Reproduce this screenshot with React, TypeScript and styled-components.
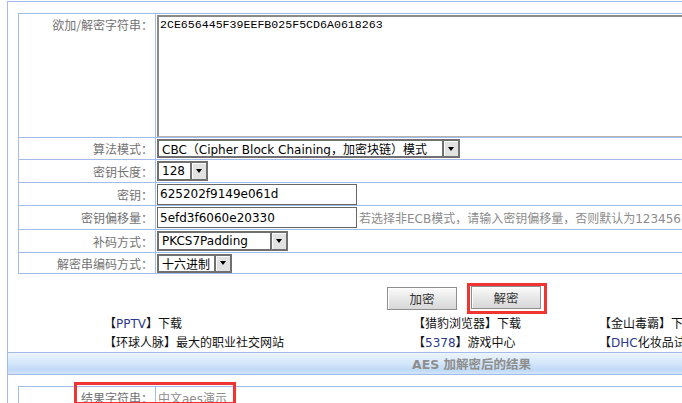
import React from 'react';
import styled, { createGlobalStyle } from 'styled-components';

const line = '#a2bbe8';
const cjk = `"Noto Sans CJK SC", sans-serif`;
const latin = `"DejaVu Sans", "Noto Sans CJK SC", sans-serif`;

const GlobalStyle = createGlobalStyle`
  html, body {
    margin: 0;
    padding: 0;
    background: #fff;
    overflow: hidden;
  }
  body {
    font-family: ${latin};
    font-size: 12px;
    color: #000;
  }
`;

const App: React.FC = () => {
  return (
    <>
      <GlobalStyle />
      <Page>
        <Section>
          <FormBox>
            <Row $h={124}>
              <Label $top>欲加/解密字符串：</Label>
              <Cell $top>
                <Area readOnly value="2CE656445F39EEFB025F5CD6A0618263" />
              </Cell>
            </Row>
            <Row $h={22}>
              <Label>算法模式：</Label>
              <Cell>
                <Select $w={303} $h={19}>
                  <SelectText>CBC（Cipher Block Chaining，加密块链）模式</SelectText>
                  <Arrow />
                </Select>
              </Cell>
            </Row>
            <Row $h={23}>
              <Label>密钥长度：</Label>
              <Cell>
                <Select $w={51} $h={20}>
                  <SelectText>128</SelectText>
                  <Arrow />
                </Select>
              </Cell>
            </Row>
            <Row $h={23}>
              <Label>密钥：</Label>
              <Cell>
                <Input readOnly value="625202f9149e061d" />
              </Cell>
            </Row>
            <Row $h={24}>
              <Label>密钥偏移量：</Label>
              <Cell>
                <Input readOnly value="5efd3f6060e20330" />
                <Hint>若选择非ECB模式，请输入密钥偏移量，否则默认为1234567890123456</Hint>
              </Cell>
            </Row>
            <Row $h={23}>
              <Label>补码方式：</Label>
              <Cell>
                <Select $w={131} $h={20}>
                  <SelectText>PKCS7Padding</SelectText>
                  <Arrow />
                </Select>
              </Cell>
            </Row>
            <Row $h={21}>
              <Label>解密串编码方式：</Label>
              <Cell>
                <Select $w={75} $h={19}>
                  <SelectText>十六进制</SelectText>
                  <Arrow />
                </Select>
              </Cell>
            </Row>
          </FormBox>

          <ButtonBar>
            <Button>加密</Button>
            <Highlight>
              <Button>解密</Button>
            </Highlight>
          </ButtonBar>

          <Ads>
            <Ad>【<Latin>PPTV</Latin>】下载</Ad>
            <Ad>【猎豹浏览器】下载</Ad>
            <Ad>【金山毒霸】下载</Ad>
            <Ad>【环球人脉】最大的职业社交网站</Ad>
            <Ad>【<Latin>5378</Latin>】游戏中心</Ad>
            <Ad>【<Latin>DHC</Latin>化妆品试用】</Ad>
          </Ads>
        </Section>

        <Bar>
          <BarTitle>AES 加解密后的结果</BarTitle>
        </Bar>

        <ResultSection>
          <FormBox>
            <Row $h={22}>
              <Label>结果字符串：</Label>
              <Cell>
                <ResultText>中文aes演示</ResultText>
              </Cell>
            </Row>
          </FormBox>
          <Mark />
        </ResultSection>
      </Page>
    </>
  );
};

const Page = styled.div`
  margin: 1px 0 0 7px;
  width: 1000px;
  height: 430px;
  border-top: 1px solid ${line};
  border-left: 1px solid ${line};
`;

const Section = styled.div`
  padding: 11px 0 0 10px;
`;

const FormBox = styled.div`
  border-top: 1px solid ${line};
  border-left: 1px solid ${line};
`;

const Row = styled.div<{ $h: number }>`
  display: grid;
  grid-template-columns: 137px 1fr;
  height: ${({ $h }) => $h}px;
  box-sizing: border-box;
  border-bottom: 1px solid ${line};
`;

const Label = styled.div<{ $top?: boolean }>`
  box-sizing: border-box;
  border-right: 1px solid ${line};
  display: flex;
  justify-content: flex-end;
  align-items: ${({ $top }) => ($top ? 'flex-start' : 'center')};
  padding: ${({ $top }) => ($top ? '2px' : '0')} 2px 0 0;
  font-family: ${cjk};
  font-size: 12px;
  color: #727272;
  white-space: nowrap;
`;

const Cell = styled.div<{ $top?: boolean }>`
  display: flex;
  align-items: ${({ $top }) => ($top ? 'flex-start' : 'center')};
  padding-left: 1px;
  white-space: nowrap;
  overflow: hidden;
`;

const Area = styled.textarea`
  box-sizing: border-box;
  width: 800px;
  height: 122px;
  margin: 1px 0 0;
  border: 1px solid #b4b4b4;
  border-top: 2px solid #8a8a8a;
  border-left: 2px solid #8a8a8a;
  padding: 1px 1px;
  font-family: "Liberation Mono", monospace;
  font-size: 11.6px;
  color: #000;
  resize: none;
  outline: none;
`;

const Select = styled.div<{ $w: number; $h: number }>`
  box-sizing: border-box;
  width: ${({ $w }) => $w}px;
  height: ${({ $h }) => $h}px;
  display: flex;
  border: 2px solid #707070;
  background: #fff;
  font-family: ${latin};
  font-size: 12px;
`;

const SelectText = styled.span`
  flex: 1;
  display: flex;
  align-items: center;
  padding-left: 3px;
  overflow: hidden;
`;

const Arrow = styled.span`
  width: 14px;
  border-left: 2px solid #707070;
  background: #e2e2e2;
  box-shadow: inset 1px 1px #fafafa;
  display: flex;
  align-items: center;
  justify-content: center;

  &::after {
    content: '';
    border-left: 3.5px solid transparent;
    border-right: 3.5px solid transparent;
    border-top: 4px solid #000;
  }
`;

const Input = styled.input`
  box-sizing: border-box;
  width: 200px;
  height: 21px;
  border: 1px solid #666;
  padding: 0 2px;
  font-family: ${latin};
  font-size: 12px;
  color: #000;
  outline: none;
`;

const Hint = styled.span`
  margin-left: 2px;
  font-family: ${latin};
  font-size: 12px;
  color: #8c8c8c;
`;

const ButtonBar = styled.div`
  display: flex;
  align-items: center;
  gap: 10px;
  padding: 9px 0 0 369px;
`;

const Button = styled.button`
  box-sizing: border-box;
  width: 70px;
  height: 23px;
  padding: 0;
  border: 1px solid #8e8e8e;
  background: linear-gradient(#fbfbfb, #e6e6e6 55%, #d8d8d8);
  box-shadow: inset 1px 1px #fff;
  font-family: ${cjk};
  font-size: 12.5px;
  color: #333;
`;

const Highlight = styled.span`
  display: inline-flex;
  padding: 0 3px 2px 1px;
  border: 3px solid #f03434;
`;

const Ads = styled.div`
  display: grid;
  grid-template-columns: 309px 186px 1fr;
  padding-left: 86px;
  line-height: 17px;
  font-family: ${cjk};
  font-size: 12px;
  color: #111;
  white-space: nowrap;
`;

const Ad = styled.div`
  overflow: hidden;
`;

const Latin = styled.span`
  font-family: ${latin};
  color: #2c3a8c;
`;

const Bar = styled.div`
  box-sizing: border-box;
  height: 23px;
  border-top: 1px solid ${line};
  border-bottom: 1px solid ${line};
  background: linear-gradient(#edf5fd, #d3e6fa 50%, #bfd9f6 80%, #d2e5f9);
  display: flex;
  align-items: center;
  padding-left: 404px;
`;

const BarTitle = styled.span`
  font-family: ${latin};
  font-weight: bold;
  font-size: 12.5px;
  color: #8e8e8e;
`;

const ResultSection = styled.div`
  position: relative;
  padding: 11px 0 0 10px;
`;

const ResultText = styled.span`
  padding-left: 1px;
  font-family: ${latin};
  font-size: 12px;
  color: #8e8e8e;
`;

const Mark = styled.div`
  position: absolute;
  left: 66px;
  top: 7px;
  width: 162px;
  height: 23px;
  box-sizing: border-box;
  border: 3px solid #f03434;
`;

export default App;
